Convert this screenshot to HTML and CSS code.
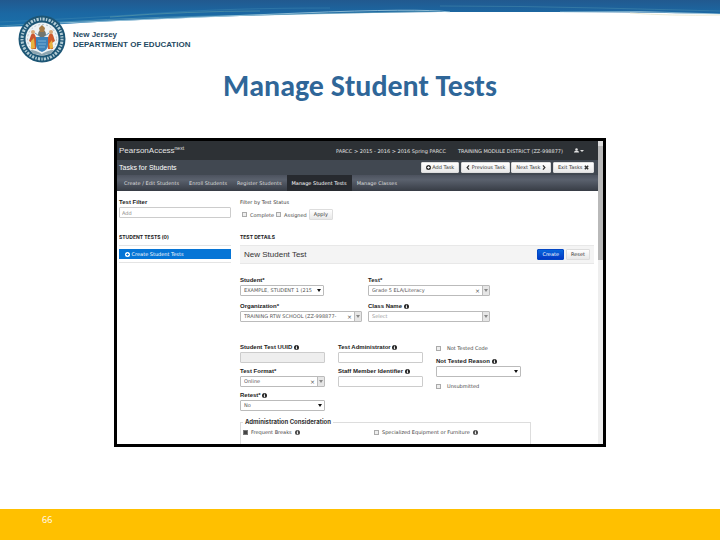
FILE: index.html
```html
<!DOCTYPE html>
<html lang="en">
<head>
<meta charset="utf-8">
<title>Manage Student Tests</title>
<link rel="stylesheet" href="styles.css">
</head>
<body>
<svg width="0" height="0" class="defs" aria-hidden="true">
  <symbol id="info" viewBox="0 0 12 12"><circle cx="6" cy="6" r="6" fill="currentColor"/><path d="M5 2h2v2H5zM4 5h3v4h1v1H4V9h1V6H4z" fill="#fff"/></symbol>
  <symbol id="plus" viewBox="0 0 12 12"><circle cx="6" cy="6" r="6" fill="currentColor"/><path d="M5 3h2v2h2v2H7v2H5V7H3V5h2z" fill="var(--cut, #fff)"/></symbol>
  <symbol id="left" viewBox="0 0 8 12"><path d="M6.500 1L2 6l4.500 5" fill="none" stroke="currentColor" stroke-width="3"/></symbol>
  <symbol id="right" viewBox="0 0 8 12"><path d="M1.500 1L6 6l-4.500 5" fill="none" stroke="currentColor" stroke-width="3"/></symbol>
  <symbol id="cross" viewBox="0 0 12 12"><path d="M2 2l8 8M10 2l-8 8" fill="none" stroke="currentColor" stroke-width="3.600"/></symbol>
  <symbol id="user" viewBox="0 0 12 12"><circle cx="6" cy="3.500" r="3" fill="currentColor"/><path d="M0 11c0-4 3-4.500 6-4.500s6 .5 6 4.500z" fill="currentColor"/></symbol>
</svg>

<svg class="wave" viewBox="0 0 720 30" preserveAspectRatio="none" aria-hidden="true">
  <defs><linearGradient id="sea" x1="0" y1="0" x2="0" y2="1"><stop offset="0" stop-color="#22598f"/><stop offset=".5" stop-color="#1b68a3"/><stop offset="1" stop-color="#1a70aa"/></linearGradient></defs>
  <path d="M0 0H720V14Q630 12 560 12H440Q330 13 240 16Q150 19 80 23Q40 26 0 27Z" fill="url(#sea)"/>
  <g fill="none">
    <path d="M0 26Q110 18 210 16T440 11" stroke="#5fa0b8" stroke-width=".6"/>
    <path d="M0 22Q90 18 160 13T330 8" stroke="#3f87b0" stroke-width=".5"/>
    <path d="M60 23Q180 18 300 13T450 12" stroke="#b8dbe8" stroke-width=".7"/>
    <path d="M110 17Q190 11 260 11" stroke="#6da9a8" stroke-width=".5"/>
    <path d="M440 6Q520 6 600 8T720 11" stroke="#4a8fae" stroke-width=".5"/>
    <path d="M560 12Q640 10 720 14" stroke="#b8dbe8" stroke-width=".6"/>
    <path d="M630 13Q670 16 720 15" stroke="#e6e6cf" stroke-width=".8"/>
  </g>
</svg>

<header class="brand">
  <svg class="seal" viewBox="0 0 48 48" role="img" aria-label="State seal">
    <circle cx="24" cy="24" r="23.500" fill="#1d5675"/>
    <circle cx="24" cy="24" r="20" fill="none" stroke="#b3ccd5" stroke-width="3" stroke-dasharray="1.400 1.300 2.200 1.200"/>
    <circle cx="24" cy="24" r="16.500" fill="#eef3f5"/>
    <circle cx="24" cy="24" r="14.500" fill="none" stroke="#a5b5bd" stroke-width=".8" stroke-dasharray="2 2"/>
    <path d="M13 20q2-4 4 0l2 5-1 9h-5l1-6-3-2z" fill="#c8552f"/>
    <path d="M35 20q-2-4-4 0l-2 5 1 9h5l-1-6 3-2z" fill="#cf5b2d"/>
    <circle cx="15" cy="17" r="2" fill="#d9a877"/><circle cx="33" cy="17" r="2" fill="#d9a877"/>
    <path d="M13 26l3-3 1 10-4 1zM34 25l-3 4 1 5 3-1z" fill="#e8b33f"/>
    <path d="M18 22h12v8q0 5-6 7-6-2-6-7z" fill="#3d82b9"/>
    <path d="M20 26h8M20 29h8M21 32h6" stroke="#89bbdc" stroke-width=".8"/>
    <path d="M20 20q0-5 4-5t4 5l-2 2h-4z" fill="#73766e"/>
    <path d="M21 13l3-3 3 3-1 4h-4z" fill="#a67c46"/>
    <path d="M17 18l4 3M31 18l-4 3" stroke="#6d9aba"/>
    <path d="M12 35q6 0 12 4 6-4 12-4l-3 4q-5 0-9 2-4-2-9-2z" fill="#8ca5b1"/>
  </svg>
  <p class="brand-name">New Jersey<br>DEPARTMENT OF EDUCATION</p>
</header>

<main>
  <h1>Manage Student Tests</h1>
  <section class="app">
    <div class="window">
      <div class="topbar">
        <span class="product">PearsonAccess<sup>next</sup></span>
        <span class="scope">PARCC &gt; 2015 - 2016 &gt; 2016 Spring PARCC</span>
        <span class="district">TRAINING MODULE DISTRICT (ZZ-998877)</span>
        <button class="user" aria-label="Account"><svg class="icon"><use href="#user"/></svg><i class="caret"></i></button>
      </div>
      <div class="taskbar">
        <h2>Tasks for Students</h2>
        <button class="btn"><svg class="icon"><use href="#plus"/></svg> Add Task</button>
        <div class="pair">
          <button class="btn"><svg class="icon slim"><use href="#left"/></svg> Previous Task</button>
          <button class="btn">Next Task <svg class="icon slim"><use href="#right"/></svg></button>
        </div>
        <button class="btn">Exit Tasks <svg class="icon"><use href="#cross"/></svg></button>
      </div>
      <nav class="tabs">
        <a href="#">Create / Edit Students</a>
        <a href="#">Enroll Students</a>
        <a href="#">Register Students</a>
        <a href="#" class="active" aria-current="page">Manage Student Tests</a>
        <a href="#">Manage Classes</a>
      </nav>

      <div class="content">
        <aside>
          <div class="filter">
            <label class="name" for="filter">Test Filter</label>
            <input class="field" id="filter" type="text" placeholder="Add">
          </div>
          <h3>STUDENT TESTS (0)</h3>
          <div class="list"><a href="#"><svg class="icon"><use href="#plus"/></svg> Create Student Tests</a></div>
        </aside>

        <div class="details">
          <div class="filter">
            <span class="plain">Filter by Test Status</span>
            <div class="status">
              <label class="check"><input type="checkbox"> Complete</label>
              <label class="check"><input type="checkbox"> Assigned</label>
              <button class="btn">Apply</button>
            </div>
          </div>
          <h3>TEST DETAILS</h3>
          <div class="heading">
            <h4>New Student Test</h4>
            <button class="btn primary">Create</button>
            <button class="btn">Reset</button>
          </div>

          <form>
            <div class="wide-grid">
              <div class="item">
                <label class="name" for="student">Student*</label>
                <div class="box arrow short"><select id="student"><option>EXAMPLE, STUDENT 1 (215</option></select></div>
              </div>
              <div class="item">
                <label class="name" for="test">Test*</label>
                <div class="box combo clear"><select id="test"><option>Grade 5 ELA/Literacy</option></select></div>
              </div>
              <div class="item">
                <label class="name" for="org">Organization*</label>
                <div class="box combo clear"><select id="org"><option>TRAINING RTW SCHOOL (ZZ-998877-</option></select></div>
              </div>
              <div class="item">
                <label class="name" for="class">Class Name <svg class="icon"><use href="#info"/></svg></label>
                <div class="box combo empty"><select id="class"><option>Select</option></select></div>
              </div>
            </div>

            <div class="columns">
              <div class="column">
                <div class="item">
                  <label class="name" for="uuid">Student Test UUID <svg class="icon"><use href="#info"/></svg></label>
                  <input class="field" id="uuid" type="text" disabled>
                </div>
                <div class="item">
                  <label class="name" for="format">Test Format*</label>
                  <div class="box combo clear"><select id="format"><option>Online</option></select></div>
                </div>
                <div class="item">
                  <label class="name" for="retest">Retest* <svg class="icon"><use href="#info"/></svg></label>
                  <div class="box arrow"><select id="retest"><option>No</option></select></div>
                </div>
              </div>
              <div class="column">
                <div class="item">
                  <label class="name" for="admin">Test Administrator <svg class="icon"><use href="#info"/></svg></label>
                  <input class="field" id="admin" type="text">
                </div>
                <div class="item">
                  <label class="name" for="staff">Staff Member Identifier <svg class="icon"><use href="#info"/></svg></label>
                  <input class="field" id="staff" type="text">
                </div>
              </div>
              <div class="column codes">
                <label class="check"><input type="checkbox"> Not Tested Code</label>
                <div class="item">
                  <label class="name" for="reason">Not Tested Reason <svg class="icon"><use href="#info"/></svg></label>
                  <div class="box arrow"><select id="reason"><option></option></select></div>
                </div>
                <label class="check"><input type="checkbox"> Unsubmitted</label>
              </div>
            </div>

            <fieldset>
              <legend>Administration Consideration</legend>
              <label class="check"><input type="checkbox" checked> Frequent Breaks <svg class="icon"><use href="#info"/></svg></label>
              <label class="check"><input type="checkbox"> Specialized Equipment or Furniture <svg class="icon"><use href="#info"/></svg></label>
            </fieldset>
          </form>
        </div>
      </div>
    </div>
    <div class="scroll" aria-hidden="true"><i class="up"></i><i class="thumb"></i></div>
  </section>
</main>

<footer>66</footer>
</body>
</html>
```
FILE: styles.css
```css
* { box-sizing: border-box; }

body {
  margin: 0;
  min-height: 100vh;
  display: flex;
  flex-direction: column;
  position: relative;
  background: #fff;
  color: #333;
  font: 5px/8px "DejaVu Sans", sans-serif;
}

h1, h2, h3, h4, p { margin: 0; }
button, input, select { font: inherit; color: inherit; margin: 0; }
a { color: inherit; text-decoration: none; }
.defs { position: absolute; }

.wave { position: absolute; top: 0; left: 0; width: 100%; height: 30px; }

.brand {
  position: relative;
  display: flex;
  align-items: center;
  gap: 7px;
  padding: 15px 18px 0;
}
.seal { width: 48px; height: 48px; }
.brand-name {
  padding-top: 2px;
  color: #1f4a63;
  font: 700 8px/10px "Liberation Sans", Arial, sans-serif;
}

main { flex: 1; padding: 0 20px; }
h1 {
  margin: 6px 0 35px;
  color: #2f6698;
  font: 700 30px/34px Carlito, Lato, sans-serif;
  text-align: center;
}

.app {
  display: flex;
  max-width: 492px;
  margin: 0 auto;
  border: 3px solid #000;
}
.window { flex: 1; min-width: 0; }

.icon { width: 5px; height: 5px; vertical-align: -1px; }
.slim { width: 4px; }

.topbar {
  display: flex;
  align-items: center;
  height: 19px;
  padding: 0 14px 0 2px;
  background: #2d3135;
  color: #e2e2e2;
}
.product { flex: 1; font: 8px/10px "Liberation Sans", Arial, sans-serif; }
.product sup { font-size: 5px; line-height: 5px; vertical-align: 3px; }
.district { margin: 0 11px 0 12px; }
.user { display: flex; align-items: center; gap: 1px; padding: 0; border: 0; background: none; }
.caret { border: 2px solid transparent; border-top-color: #ddd; border-bottom: 0; }

.taskbar {
  display: flex;
  align-items: center;
  gap: 2px;
  height: 15px;
  padding: 0 4px 0 2px;
  background: #414851;
}
.taskbar h2 { flex: 1; color: #fff; font: 7px/8px "Liberation Sans", Arial, sans-serif; }
.pair { display: flex; gap: 1px; }

.btn {
  height: 11px;
  padding: 0 4px;
  border: 1px solid #ddd;
  border-radius: 1px;
  background: linear-gradient(#fff, #e8e8e8);
  color: #333;
  line-height: 9px;
  white-space: nowrap;
}
.primary { border-color: #0346c4; background: linear-gradient(#0866dc, #0338c4); color: #fff; }

.tabs {
  display: flex;
  height: 16px;
  padding-left: 2px;
  background: linear-gradient(#4c525e, #5a616d 30%, #373c45);
  color: #ddd;
  line-height: 16px;
}
.tabs a { padding: 0 5px; }
.tabs .active { background: #272a2f; color: #fff; }

.content {
  display: grid;
  grid-template-columns: 112px 1fr;
  gap: 9px;
  height: 253px;
  overflow: hidden;
  padding: 7px 4px 0 2px;
}

.name {
  display: block;
  color: #222;
  font: 700 6px/8px "Liberation Sans", Arial, sans-serif;
}
.plain { display: block; }
.filter { height: 35px; }
.field {
  display: block;
  width: 100%;
  height: 11px;
  margin-top: 1px;
  padding: 0 2px;
  border: 1px solid #ccc;
  border-radius: 1px;
  background: #fff;
}
.field:disabled { background: #eee; }
.field::placeholder { color: #888; }

h3 { height: 12px; font: 700 5px/8px Inter, sans-serif; color: #222; }
.list { padding: 3px 0; border: 1px solid #e4e4e4; border-width: 1px 0; }
.list a {
  --cut: #0675d6;
  display: block;
  padding: 0 6px;
  background: #0675d6;
  color: #fff;
  line-height: 10px;
}

.check { display: flex; align-items: center; gap: 3px; color: #444; }
.check input {
  appearance: none;
  flex: none;
  width: 5px;
  height: 5px;
  border: 1px solid #aaa;
  background: #eee;
}
.check input:checked { border-color: #777; background: #444; }
.status { display: flex; align-items: center; gap: 2px; margin-top: 3px; padding-left: 2px; }

.heading {
  display: flex;
  align-items: center;
  gap: 2px;
  height: 19px;
  padding: 0 4px;
  border: 1px solid #e8e8e8;
  border-width: 1px 0;
  background: #f4f4f4;
}
.heading h4 { flex: 1; font: 8px/10px "Liberation Sans", Arial, sans-serif; }

form { padding-top: 12px; }
.wide-grid {
  display: grid;
  grid-template-columns: 122px 122px;
  gap: 6px;
}
.item { display: flex; flex-direction: column; gap: 1px; }
.item .field { margin: 0; }

.box {
  position: relative;
  height: 11px;
  border: 1px solid #bbb;
  border-radius: 1px;
  background: #fff;
}
.short { width: 84px; }
.box select {
  display: block;
  appearance: none;
  width: 100%;
  height: 9px;
  padding: 0 3px;
  border: 0;
  background: transparent;
  color: #555;
  line-height: 9px;
}
.empty select { color: #999; }
.arrow::after, .combo::after {
  content: "";
  position: absolute;
  right: 2px;
  top: 3px;
  border: 2px solid transparent;
  border-top: 3px solid #111;
  border-bottom: 0;
}
.combo { background: linear-gradient(90deg, transparent calc(100% - 7px), #bbb 0, #bbb calc(100% - 6px), #e6e6e6 0); }
.combo::after { right: 1px; border-top-color: #888; }
.clear::before {
  content: "×";
  position: absolute;
  right: 9px;
  top: 0;
  color: #555;
  font-size: 6px;
  line-height: 9px;
}

.columns {
  display: grid;
  grid-template-columns: repeat(3, 85px);
  gap: 13px;
  margin-top: 21px;
}
.column { display: flex; flex-direction: column; gap: 4px; }
.codes .check { height: 10px; gap: 6px; }

fieldset {
  display: grid;
  grid-template-columns: 131px 1fr;
  width: 291px;
  height: 40px;
  align-content: start;
  margin: 7px 0 0;
  padding: 2px 2px 0;
  border: 1px solid #ddd;
}
legend { padding: 0 2px; font: 700 6px/8px Inter, sans-serif; color: #333; }

.scroll { width: 5px; background: #eee; }
.up { display: block; height: 5px; background: #ddd; }
.thumb { display: block; height: 114px; background: #b9b9b9; }

footer {
  height: 31px;
  padding: 0 42px;
  background: #ffc000;
  color: #fff;
  font: 9px/22px "Open Sans", sans-serif;
}
```
